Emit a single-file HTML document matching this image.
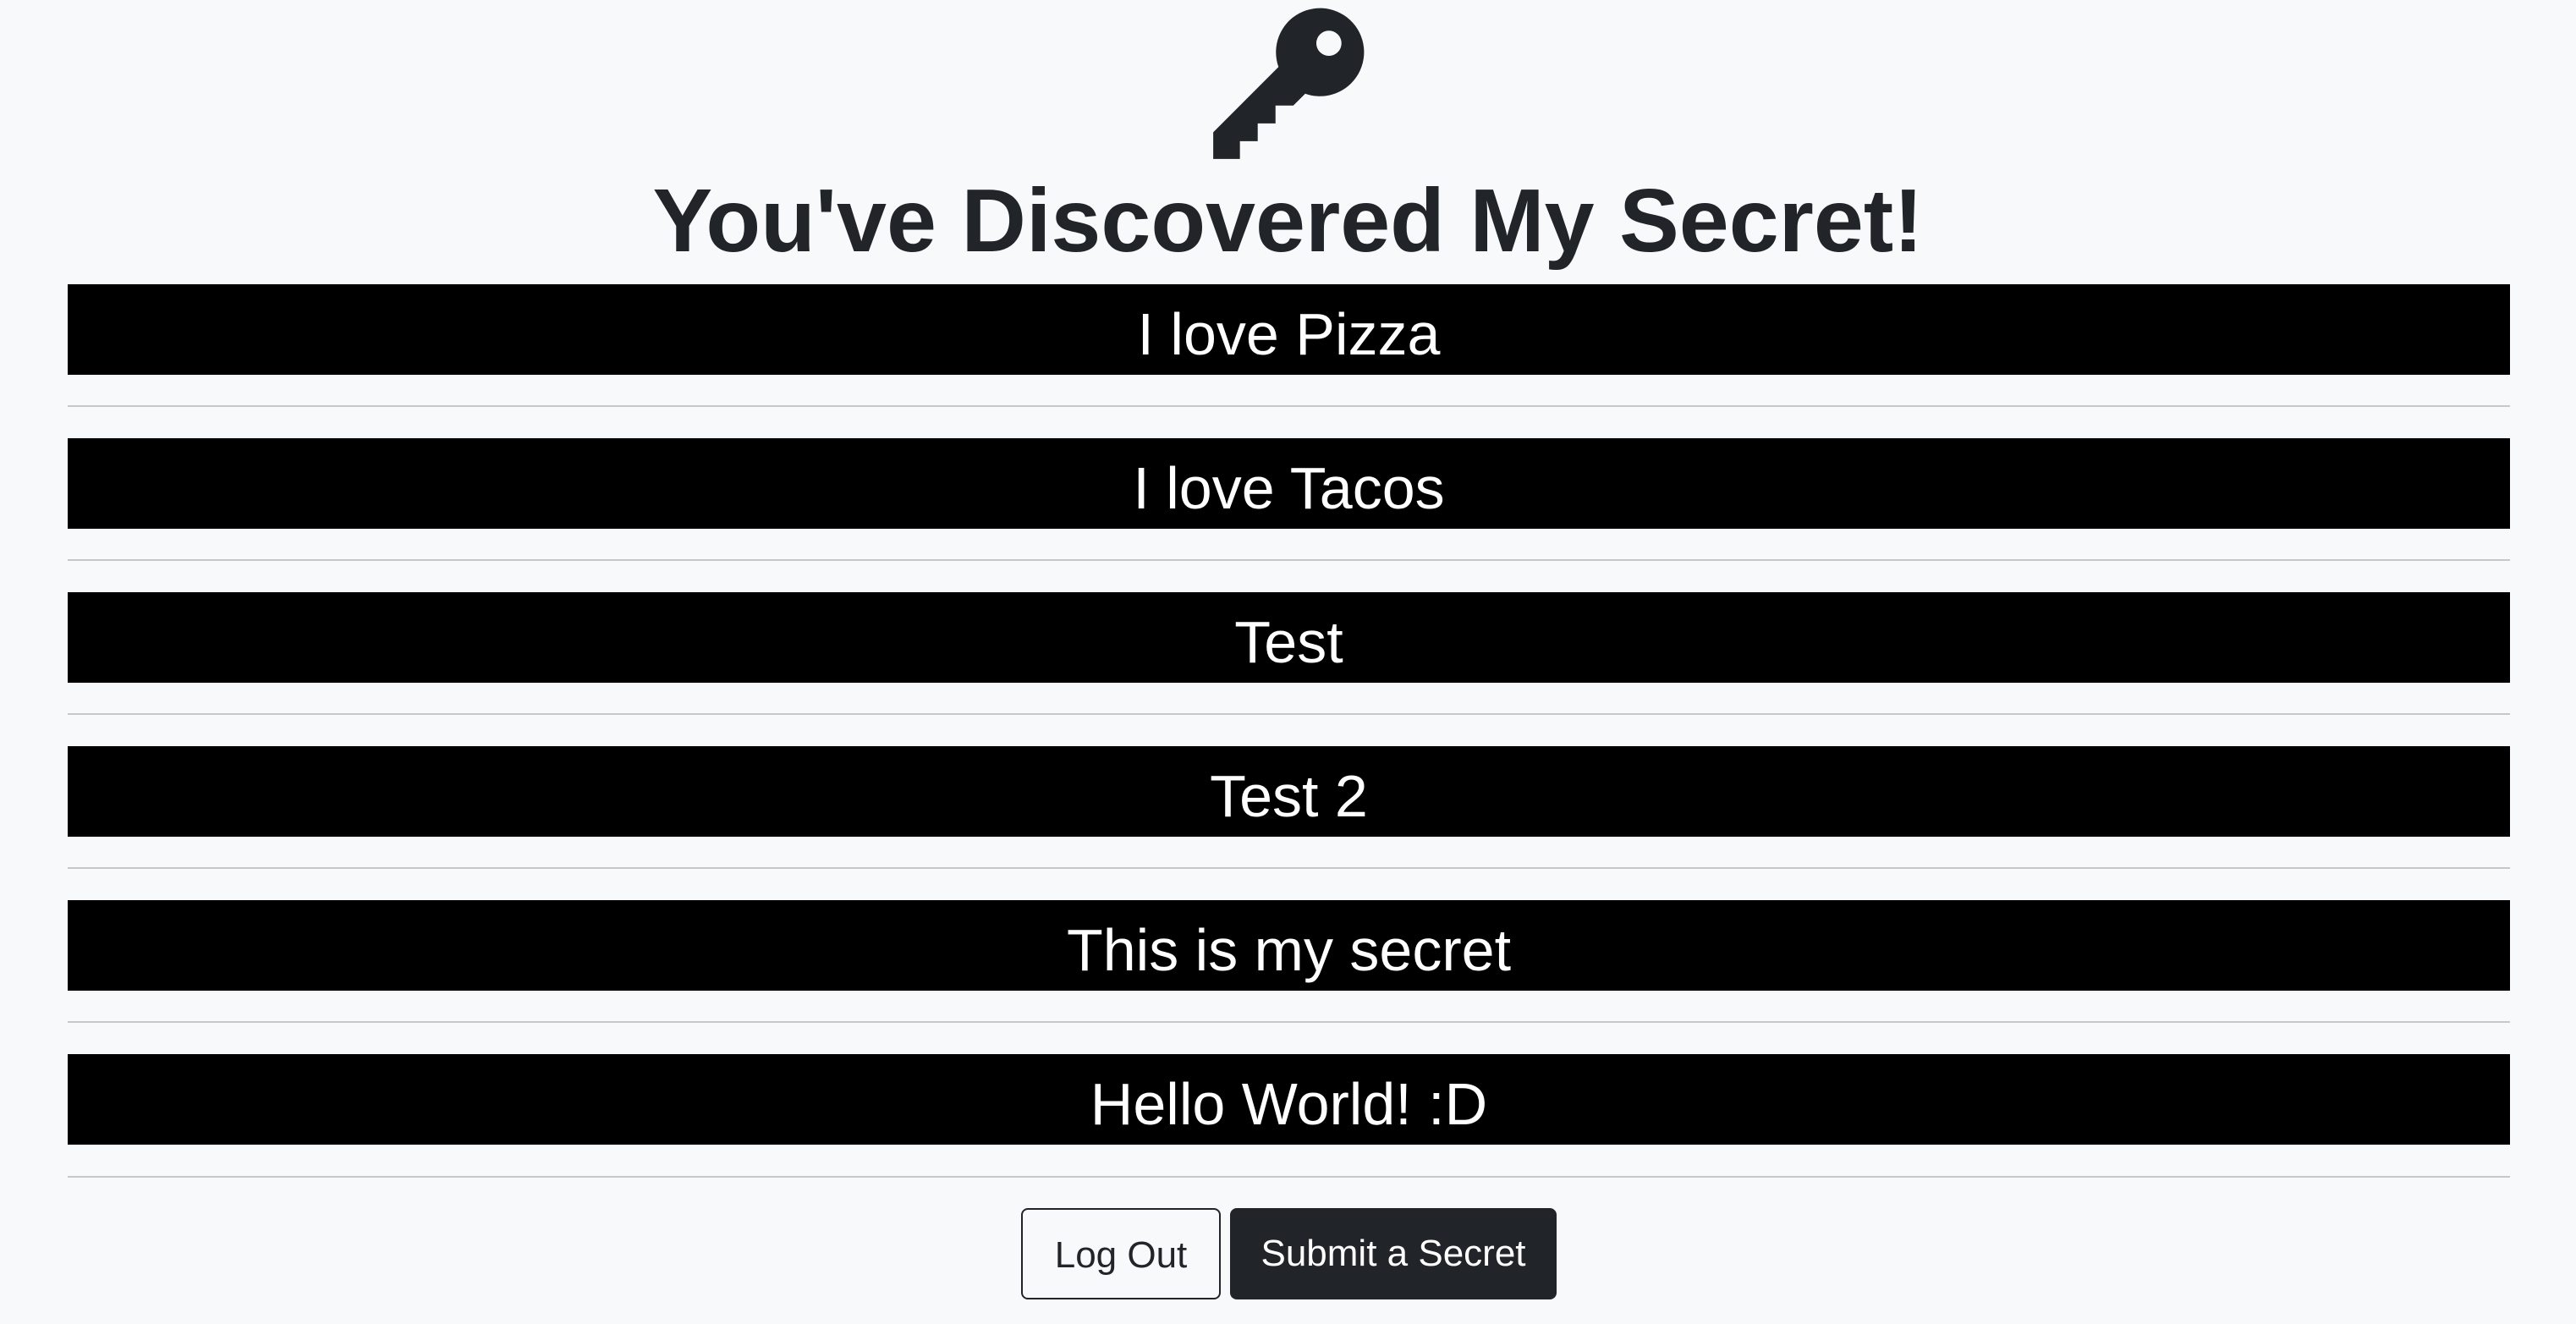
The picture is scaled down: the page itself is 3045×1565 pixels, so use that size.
<!DOCTYPE html>
<html><head><meta charset="utf-8"><style>
html,body{margin:0;padding:0;background:#f8f9fa;width:3045px;height:1565px;overflow:hidden;font-family:"Liberation Sans",sans-serif;color:#212529}
.key{position:absolute;left:1394px;top:-10px;width:238px;height:238px}
h1{position:absolute;left:0;width:3045px;top:196px;margin:0;text-align:center;font-size:106px;font-weight:bold;line-height:130px;letter-spacing:0}
.bar{position:absolute;left:80px;width:2887px;height:107px;background:#000;color:#fff;text-align:center;font-size:70px;line-height:118px;overflow:hidden}
.hr{position:absolute;left:80px;width:2887px;height:2px;background:#c6c7c8}
.btn{position:absolute;top:1428px;height:108px;box-sizing:border-box;border-radius:8px;font-size:44px;line-height:108px;text-align:center}
</style></head><body>
<svg class="key" viewBox="0 0 16 16"><g transform="rotate(-45 8 8) translate(16 0) scale(-1 1)"><path fill="#212529" fill-rule="evenodd" d="M3.5 11.5a3.5 3.5 0 1 1 3.163-5H14L15.5 8 14 9.5l-1-1-1 1-1-1-1 1-1-1-1 1H6.663a3.5 3.5 0 0 1-3.163 2zM2.5 9a1 1 0 1 0 0-2 1 1 0 0 0 0 2z"/></g></svg>
<h1>You've Discovered My Secret!</h1>
<div class="bar" style="top:336px">I love Pizza</div><div class="hr" style="top:479px"></div>
<div class="bar" style="top:518px">I love Tacos</div><div class="hr" style="top:661px"></div>
<div class="bar" style="top:700px">Test</div><div class="hr" style="top:843px"></div>
<div class="bar" style="top:882px">Test 2</div><div class="hr" style="top:1025px"></div>
<div class="bar" style="top:1064px">This is my secret</div><div class="hr" style="top:1207px"></div>
<div class="bar" style="top:1246px">Hello World! :D</div><div class="hr" style="top:1390px"></div>
<div class="btn" style="left:1207px;width:236px;border:2px solid #212529;color:#212529">Log Out</div>
<div class="btn" style="left:1454px;width:386px;background:#212529;color:#fff">Submit a Secret</div>
</body></html>
